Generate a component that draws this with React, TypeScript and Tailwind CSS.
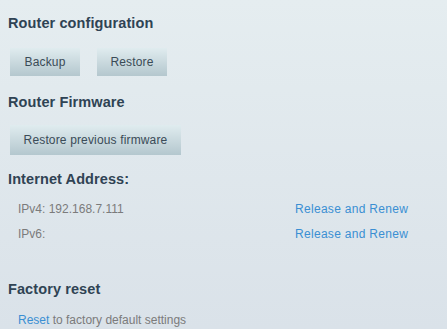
import React from "react";

const font = { fontFamily: '"Liberation Sans", Arial, sans-serif' };

function Btn({ children, className = "" }: { children: React.ReactNode; className?: string }) {
  return (
    <button
      className={
        "min-w-[70px] text-[12px] leading-[14px] tracking-[0.15px] text-[#3a4b57] bg-gradient-to-b from-[#e0ecef] to-[#b4c7ce] " +
        className
      }
    >
      {children}
    </button>
  );
}

function H({ children, className = "" }: { children: React.ReactNode; className?: string }) {
  return (
    <h2 className={"text-[14.5px] leading-[18px] font-bold text-[#2f4354] tracking-[0.1px] " + className}>{children}</h2>
  );
}

export default function App() {
  return (
    <div
      style={font}
      className="w-[447px] h-[329px] overflow-hidden bg-gradient-to-b from-[#e5edf0] to-[#dae2e9] pl-[8px] pt-[14px]"
    >
      <H>Router configuration</H>
      <div className="mt-[16px] flex gap-[17px] pl-[2px]">
        <Btn className="h-[28px] px-[13px]">Backup</Btn>
        <Btn className="h-[28px] px-[13px]">Restore</Btn>
      </div>
      <H className="mt-[17px]">Router Firmware</H>
      <div className="mt-[14px] pl-[2px]">
        <Btn className="h-[30px] w-[171px]">Restore previous firmware</Btn>
      </div>
      <H className="mt-[15px]">Internet Address:</H>
      <div className="mt-[14px] flex pl-[10px] text-[12px] leading-[14px]">
        <span className="w-[277px] text-[#7b7b7b]">IPv4: 192.168.7.111</span>
        <a className="text-[#3a8fd3] tracking-[0.3px]">Release and Renew</a>
      </div>
      <div className="mt-[11px] flex pl-[10px] text-[12px] leading-[14px]">
        <span className="w-[277px] text-[#7b7b7b]">IPv6:</span>
        <a className="text-[#3a8fd3] tracking-[0.3px]">Release and Renew</a>
      </div>
      <H className="mt-[39px]">Factory reset</H>
      <div className="mt-[15px] pl-[10px] text-[12px] leading-[14px] text-[#7b7b7b]">
        <a className="text-[#3a8fd3]">Reset</a> to factory default settings
      </div>
    </div>
  );
}
